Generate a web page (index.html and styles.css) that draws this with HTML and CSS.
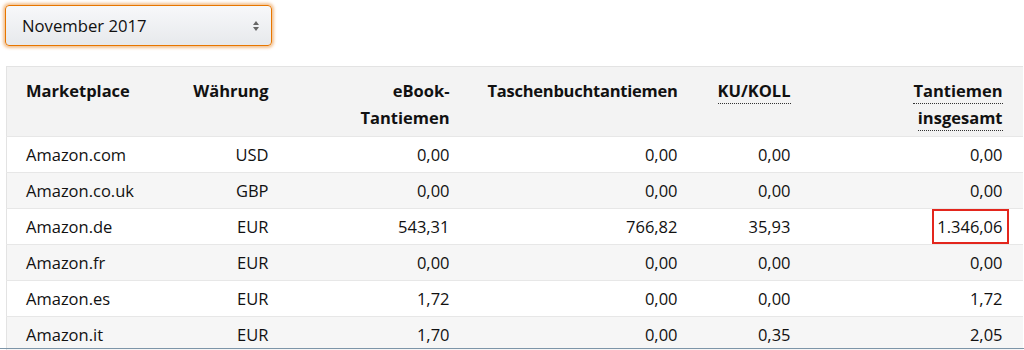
FILE: index.html
```html
<!DOCTYPE html>
<html lang="de">
<head>
<meta charset="utf-8">
<link rel="stylesheet" href="styles.css">
</head>
<body>
<div class="page">
  <div class="select">
    <span class="select-label">November 2017</span>
    <svg class="select-arrows" width="8" height="12" viewBox="0 0 8 12"><path d="M4 1 L7 5 L1 5 Z" fill="#666"/><path d="M4 11 L7 7 L1 7 Z" fill="#666"/></svg>
  </div>
  <table class="report">
    <colgroup>
      <col class="c1"><col class="c2"><col class="c3"><col class="c4"><col class="c5"><col class="c6">
    </colgroup>
    <thead>
      <tr>
        <th class="left">Marketplace</th>
        <th>Währung</th>
        <th>eBook-<br>Tantiemen</th>
        <th class="narrow">Taschenbuchtantiemen</th>
        <th><span class="dotted">KU/KOLL</span></th>
        <th class="last"><span class="dotted">Tantiemen</span><br><span class="dotted">insgesamt</span></th>
      </tr>
    </thead>
    <tbody>
      <tr><td class="left">Amazon.com</td><td>USD</td><td>0,00</td><td>0,00</td><td>0,00</td><td class="last">0,00</td></tr>
      <tr class="alt"><td class="left">Amazon.co.uk</td><td>GBP</td><td>0,00</td><td>0,00</td><td>0,00</td><td class="last">0,00</td></tr>
      <tr><td class="left">Amazon.de</td><td>EUR</td><td>543,31</td><td>766,82</td><td>35,93</td><td class="last"><span class="highlight">1.346,06</span></td></tr>
      <tr class="alt"><td class="left">Amazon.fr</td><td>EUR</td><td>0,00</td><td>0,00</td><td>0,00</td><td class="last">0,00</td></tr>
      <tr><td class="left">Amazon.es</td><td>EUR</td><td>1,72</td><td>0,00</td><td>0,00</td><td class="last">1,72</td></tr>
      <tr class="alt"><td class="left">Amazon.it</td><td>EUR</td><td>1,70</td><td>0,00</td><td>0,35</td><td class="last">2,05</td></tr>
    </tbody>
  </table>
</div>
<div class="edge"></div>
</body>
</html>
```

FILE: styles.css
```css
html, body {
  margin: 0;
  padding: 0;
  background: #ffffff;
  overflow: hidden;
}
body {
  font-family: "Open Sans", "Liberation Sans", sans-serif;
  color: #111111;
  height: 350px;
}
.page {
  padding: 5px 0 0 6px;
  display: flex;
  flex-direction: column;
  align-items: flex-start;
  gap: 20px;
}
.select {
  box-sizing: border-box;
  width: 267px;
  height: 41px;
  margin-left: -1px;
  display: flex;
  align-items: center;
  justify-content: space-between;
  padding: 0 11px 0 16px;
  border: 1px solid #e77600;
  border-radius: 4px;
  background: linear-gradient(#f7f8fa, #e7e9ec);
  box-shadow: 0 0 3px 2px rgba(228, 121, 17, 0.45);
  font-size: 16.7px;
  color: #111;
}
.select-arrows {
  display: block;
}
.report {
  border-collapse: collapse;
  table-layout: fixed;
  width: 1016px;
  border: 1px solid #e3e3e3;
  border-right: none;
  font-size: 16.5px;
}
.c1 { width: 164px; }
.c2 { width: 117px; }
.c3 { width: 181px; }
.c4 { width: 228px; }
.c5 { width: 113px; }
.c6 { width: 213px; }
.report th {
  background: #f3f3f3;
  font-weight: 700;
  text-align: right;
  vertical-align: top;
  padding: 10px 19px 5px 19px;
  line-height: 27px;
  height: 54px;
}
.report th.narrow {
  letter-spacing: -0.25px;
}
.report td {
  text-align: right;
  padding: 0 19px;
  height: 35px;
  line-height: 20px;
  border-top: 1px solid #e7e7e7;
  white-space: nowrap;
}
.report .last {
  padding-right: 20px;
}
.report .left {
  text-align: left;
}
.report tr.alt td {
  background: #f6f6f6;
}
.dotted {
  border-bottom: 1px dotted #333;
  padding-bottom: 1px;
}
.highlight {
  display: inline-block;
  border: 2px solid #e3261d;
  padding: 6px 4px 5px 3px;
  margin-right: -6px;
  line-height: 20px;
}
.edge {
  position: fixed;
  left: 0;
  right: 0;
  top: 348px;
  height: 1px;
  background: #7d95a8;
}
```
